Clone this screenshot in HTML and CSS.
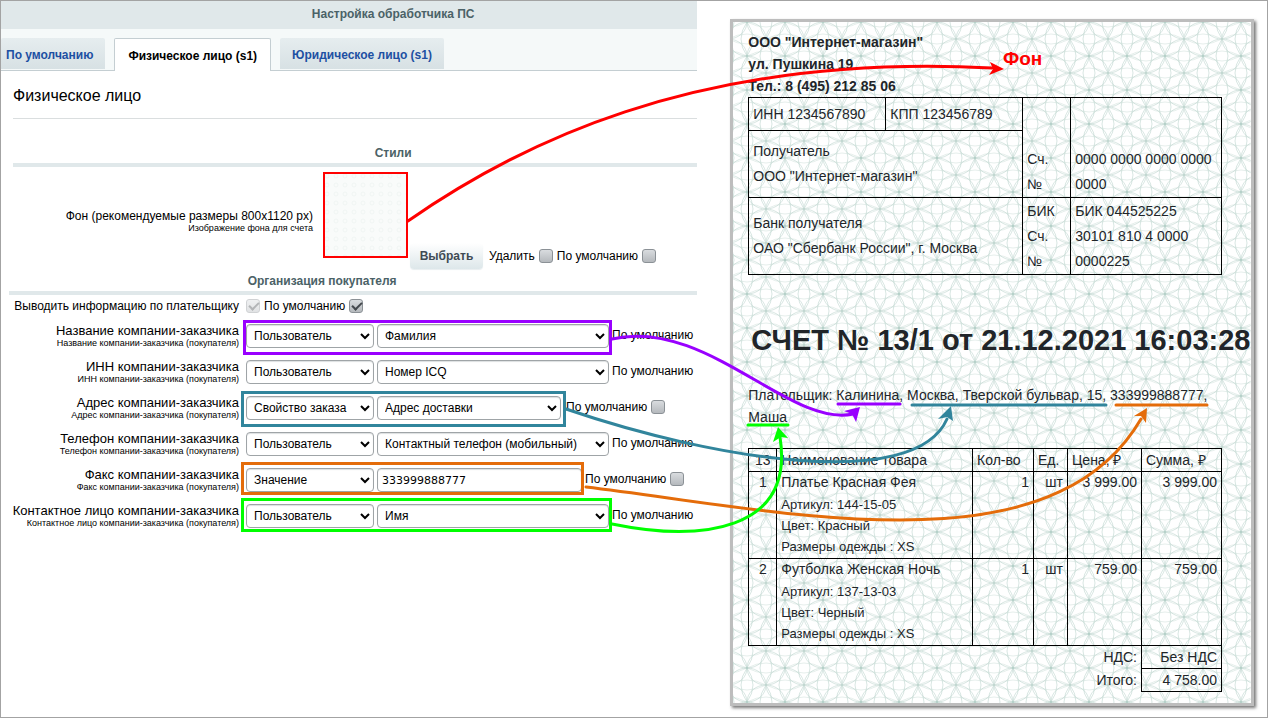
FILE: index.html
```html
<!DOCTYPE html>
<html lang="ru">
<head>
<meta charset="utf-8">
<title>Настройка обработчика ПС</title>
<link rel="stylesheet" href="styles.css">
</head>
<body>
<main class="stage">
  <section class="admin">
    <h1 class="admin-title">Настройка обработчика ПС</h1>
    <nav class="tabs">
      <a class="tab tab-first" href="#default">По умолчанию</a>
      <a class="tab tab-active" href="#person">Физическое лицо (s1)</a>
      <a class="tab" href="#company">Юридическое лицо (s1)</a>
    </nav>
    <form class="settings">
      <h2 class="pane-title">Физическое лицо</h2>
      <h3 class="group-title styles-title">Стили</h3>
      <div class="bg-row">
        <div class="field-label bg-label"><span>Фон (рекомендуемые размеры 800x1120 px)</span><small>Изображение фона для счета</small></div>
        <div class="thumb"><svg width="85" height="86" aria-hidden="true"><defs><pattern id="dots" width="9" height="9" patternUnits="userSpaceOnUse"><circle cx="4" cy="4" r="2" fill="none" stroke="#f0f4f3"/></pattern></defs><rect width="85" height="86" fill="#f9fbfa"/><rect width="85" height="86" fill="url(#dots)"/></svg></div>
        <div class="bg-actions">
          <button type="button" class="pick">Выбрать</button>
          <label class="check">Удалить <input type="checkbox"></label>
          <label class="check">По умолчанию <input type="checkbox"></label>
        </div>
      </div>
      <h3 class="group-title org-title">Организация покупателя</h3>
      <div class="fields">
        <div class="row row-short">
          <label class="field-label" for="show">Выводить информацию по плательщику</label>
          <div class="checks"><input type="checkbox" id="show" checked disabled><label class="check">По умолчанию <input type="checkbox" checked></label></div>
        </div>
        <div class="row">
          <label class="field-label" for="f1"><span>Название компании-заказчика</span><small>Название компании-заказчика (покупателя)</small></label>
          <div class="controls"><select class="kind" id="f1"><option>Пользователь</option></select><select class="value" aria-label="Название"><option>Фамилия</option></select><span class="after">По умолчанию</span></div>
        </div>
        <div class="row">
          <label class="field-label" for="f2"><span>ИНН компании-заказчика</span><small>ИНН компании-заказчика (покупателя)</small></label>
          <div class="controls"><select class="kind" id="f2"><option>Пользователь</option></select><select class="value" aria-label="ИНН"><option>Номер ICQ</option></select><span class="after">По умолчанию</span></div>
        </div>
        <div class="row">
          <label class="field-label" for="f3"><span>Адрес компании-заказчика</span><small>Адрес компании-заказчика (покупателя)</small></label>
          <div class="controls"><select class="kind" id="f3"><option>Свойство заказа</option></select><select class="value value-address" aria-label="Адрес"><option>Адрес доставки</option></select><label class="after check">По умолчанию <input type="checkbox"></label></div>
        </div>
        <div class="row">
          <label class="field-label" for="f4"><span>Телефон компании-заказчика</span><small>Телефон компании-заказчика (покупателя)</small></label>
          <div class="controls"><select class="kind" id="f4"><option>Пользователь</option></select><select class="value" aria-label="Телефон"><option>Контактный телефон (мобильный)</option></select><span class="after">По умолчанию</span></div>
        </div>
        <div class="row">
          <label class="field-label" for="f5"><span>Факс компании-заказчика</span><small>Факс компании-заказчика (покупателя)</small></label>
          <div class="controls"><select class="kind" id="f5"><option>Значение</option></select><input class="value value-text" type="text" value="333999888777" aria-label="Факс"><label class="after check">По умолчанию <input type="checkbox"></label></div>
        </div>
        <div class="row">
          <label class="field-label" for="f6"><span>Контактное лицо компании-заказчика</span><small>Контактное лицо компании-заказчика (покупателя)</small></label>
          <div class="controls"><select class="kind" id="f6"><option>Пользователь</option></select><select class="value" aria-label="Контактное лицо"><option>Имя</option></select><span class="after">По умолчанию</span></div>
        </div>
      </div>
    </form>
  </section>

  <section class="preview">
    <article class="invoice">
      <svg class="guilloche" width="100%" height="100%" aria-hidden="true">
        <defs>
          <pattern id="net" x="33" y="17" width="38" height="34" patternUnits="userSpaceOnUse">
            <g fill="none" stroke="#a9c8be" stroke-width="1" stroke-opacity=".45">
              <ellipse cx="19" cy="0" rx="19" ry="17"/><ellipse cx="19" cy="34" rx="19" ry="17"/>
              <ellipse cx="0" cy="17" rx="19" ry="17"/><ellipse cx="38" cy="17" rx="19" ry="17"/>
              <path d="M0 0Q12 17 0 34M38 0Q26 17 38 34"/>
              <path d="M19 -17Q31 0 19 17Q31 34 19 51M19 -17Q7 0 19 17Q7 34 19 51"/>
              <path d="M0 0Q19 10 38 0M0 34Q19 24 38 34M-19 17Q0 27 19 17Q38 27 57 17M-19 17Q0 7 19 17Q38 7 57 17" stroke-opacity=".3"/>
            </g>
          </pattern>
        </defs>
        <rect width="100%" height="100%" fill="url(#net)"/>
      </svg>
      <div class="paper">
        <header class="seller">
          <div>ООО "Интернет-магазин"</div>
          <div>ул. Пушкина 19</div>
          <div>Тел.: 8 (495) 212 85 06</div>
        </header>
        <table class="bank">
          <colgroup><col class="b1"><col class="b2"><col class="b3"><col></colgroup>
          <tr class="codes"><td>ИНН 1234567890</td><td>КПП 123456789</td><td rowspan="2" class="low">Сч.<br>№</td><td rowspan="2" class="low">0000 0000 0000 0000 0000</td></tr>
          <tr class="payee"><td colspan="2">Получатель<br>ООО "Интернет-магазин"</td></tr>
          <tr class="payee-bank"><td colspan="2">Банк получателя<br>ОАО "Сбербанк России", г. Москва</td><td>БИК<br>Сч.<br>№</td><td>БИК 044525225<br>30101 810 4 0000<br>0000225</td></tr>
        </table>
        <h2 class="number">СЧЕТ № 13/1 от 21.12.2021 16:03:28</h2>
        <p class="payer">Плательщик: Калинина, Москва, Тверской бульвар, 15, 333999888777,<br>Маша</p>
        <table class="items">
          <colgroup><col class="c1"><col><col class="c3"><col class="c4"><col class="c5"><col class="c6"></colgroup>
          <thead><tr><th class="mid">13</th><th>Наименование товара</th><th>Кол-во</th><th>Ед.</th><th>Цена, ₽</th><th>Сумма, ₽</th></tr></thead>
          <tbody>
            <tr><td class="mid">1</td><td>Платье Красная Фея<small>Артикул: 144-15-05<br>Цвет: Красный<br>Размеры одежды : XS</small></td><td class="num">1</td><td class="num">шт</td><td class="num">3 999.00</td><td class="num">3 999.00</td></tr>
            <tr><td class="mid">2</td><td>Футболка Женская Ночь<small>Артикул: 137-13-03<br>Цвет: Черный<br>Размеры одежды : XS</small></td><td class="num">1</td><td class="num">шт</td><td class="num">759.00</td><td class="num">759.00</td></tr>
          </tbody>
          <tfoot>
            <tr><td colspan="5" class="num total-label">НДС:</td><td class="num">Без НДС</td></tr>
            <tr><td colspan="5" class="num total-label">Итого:</td><td class="num">4 758.00</td></tr>
          </tfoot>
        </table>
      </div>
    </article>
  </section>

  <svg class="notes" width="1268" height="718" viewBox="0 0 1268 718" role="img" aria-label="Связь полей настройки со счетом">
    <g fill="none" stroke-width="3" stroke-linecap="round">
      <rect x="324" y="173" width="83" height="84" stroke="#f00" stroke-width="2"/>
      <path d="M408 221C510 150 690 52 992 68" stroke="#f00"/>
      <rect x="244.500" y="321.500" width="366" height="32" stroke="#90f"/>
      <rect x="242.500" y="392.500" width="322" height="33" stroke="#31859c"/>
      <rect x="242.500" y="463.500" width="340" height="30" stroke="#e46c0a"/>
      <rect x="242.500" y="499.500" width="368" height="31" stroke="#0f0"/>
      <path d="M612 339C705 317 790 428 853 414M838 404H900" stroke="#90f"/>
      <path d="M566 409C715 460 915 492 947 419M912 405H1106" stroke="#31859c"/>
      <path d="M586 487C780 510 1050 575 1141 419M1116 405H1207" stroke="#e46c0a"/>
      <path d="M612 524C700 542 795 532 780 437M748 425H788" stroke="#0f0"/>
    </g>
    <path d="M1004 69L989 75L993 69L990 62Z" fill="#f00"/>
    <path d="M860 407L856 422L852 414L844 411Z" fill="#90f"/>
    <path d="M951 406L953 421L947 417L938 419Z" fill="#31859c"/>
    <path d="M1147 408L1146 423L1141 416L1134 416Z" fill="#e46c0a"/>
    <path d="M778 427L788 438L781 437L773 442Z" fill="#0f0"/>
    <text class="note-text" x="1003" y="65">Фон</text>
  </svg>
</main>
</body>
</html>
```
FILE: styles.css
```css
* { box-sizing: border-box; }
body { margin: 0; background: #fff; font-family: "Liberation Sans", Arial, sans-serif; font-size: 12px; color: #000; }
h1, h2, h3, p { margin: 0; }
.stage { position: relative; display: grid; grid-template-columns: minmax(0, 11fr) minmax(0, 9fr); min-height: 100vh; border: 1px solid #a3a3a3; overflow: hidden; }

.admin-title { height: 28px; padding-left: 88px; background: #e0e8ea; color: #4b6267; font-size: 12px; line-height: 26px; text-align: center; }
.tabs { display: flex; gap: 9px; height: 42px; padding-top: 9px; background: #f5f9f9; border-bottom: 1px solid #c4ced2; }
.tab { height: 31px; padding: 0 12px; background: linear-gradient(#e6edef, #d7e1e4); color: #1d50a2; font-size: 12px; font-weight: bold; line-height: 34px; text-decoration: none; border-radius: 2px 2px 0 0; white-space: nowrap; }
.tab-first { padding: 0 12px 0 5px; }
.tab-active { height: 33px; padding: 0 13px; background: #fff; border: 1px solid #c4ced2; border-bottom: 0; color: #000; }

.pane-title { height: 48px; margin-left: 12px; border-bottom: 1px solid #dadedf; font-size: 16px; font-weight: normal; line-height: 50px; }
.group-title { border-bottom: 4px solid #e0e8ea; color: #4b6267; font-size: 12px; line-height: 20px; text-align: center; }
.styles-title { margin: 24px 0 0 12px; padding-left: 76px; }
.org-title { margin-left: 8px; padding-right: 62px; }

.bg-row { display: flex; height: 104px; padding-top: 5px; }
.field-label { display: block; text-align: right; font-size: 12px; line-height: 14px; white-space: nowrap; }
.field-label span { display: block; font-size: 13px; }
.field-label small { display: block; font-size: 9px; line-height: 10px; }
.bg-label { width: 312px; margin-top: 37px; }
.bg-label span { font-size: 12px; }
.thumb { margin-left: 10px; width: 85px; height: 86px; }
.bg-actions { display: flex; align-items: center; align-self: flex-start; gap: 4px; margin: 71px 0 0 2px; }
.pick { width: 73px; height: 26px; margin-right: 2px; padding: 0; border: 0; border-radius: 4px; background: linear-gradient(#fff, #dde7ea); box-shadow: 0 1px 1px #e8eef0; color: #3f4b54; font: bold 12px "Liberation Sans", Arial, sans-serif; }

.check { display: inline-flex; align-items: center; gap: 4px; line-height: 14px; white-space: nowrap; }
input[type=checkbox] { appearance: none; width: 14px; height: 14px; margin: 0; border: 1px solid #8b9196; border-radius: 3px; background: linear-gradient(#d9dcdf, #b5b9bd); }
input[type=checkbox]:checked::before { content: ""; display: block; width: 8px; height: 4px; margin: 2px; border: solid #43484d; border-width: 0 0 2px 2px; rotate: -45deg; }
input[type=checkbox]:disabled { opacity: .4; }

.row { display: grid; grid-template-columns: 238px 1fr; column-gap: 7px; height: 36px; }
.row-short { height: 29px; padding-top: 4px; }
.checks { display: flex; align-items: flex-start; gap: 4px; }
.controls { display: flex; align-items: flex-start; gap: 3px; }
.controls select, .value-text { height: 24px; border: 1px solid #9fa4a7; border-radius: 4px; background-color: #fff; color: #000; font: 12px "Liberation Sans", Arial, sans-serif; box-shadow: inset 0 1px 1px #dcdfe0; }
.controls select { padding: 0 3px; }
.kind { width: 128px; }
.value { width: 232px; }
.value-address { width: 184px; margin-right: 2px; }
.controls .value-text { width: 205px; padding: 0 4px; font-family: "DejaVu Sans", sans-serif; font-size: 11px; }
.after { margin-top: 4px; line-height: 14px; white-space: nowrap; }

.preview { display: flex; min-width: 0; padding: 18px 13px 11px 33px; }
.invoice { position: relative; flex: 1; min-width: 0; border: 3px solid #bdbdbd; box-shadow: 2px 2px 3px #777; color: #212529; }
.guilloche { position: absolute; inset: 0; }
.paper { position: relative; padding: 9px 29px 0 15px; font-size: 14px; }
.seller { font-weight: bold; line-height: 22px; }
table { width: 100%; border-collapse: collapse; table-layout: fixed; }
td, th { padding: 0 4px; border: 1px solid #000; font-weight: normal; text-align: left; }
.bank { line-height: 25px; }
.b1, .b2 { width: 137px; }
.b3 { width: 48px; }
.codes { height: 33px; }
.payee { height: 67px; }
.payee-bank { height: 77px; }
.low { vertical-align: bottom; }
.number { margin-top: 44px; padding-left: 3px; font-size: 29px; line-height: 42px; white-space: nowrap; }
.payer { margin-top: 23px; line-height: 22px; white-space: nowrap; }
.items { margin-top: 20px; line-height: 22px; }
.items td { vertical-align: top; }
.items tbody td { line-height: 21px; }
.items small { display: block; margin-top: 1px; padding-bottom: 1px; font-size: 13px; }
.c1 { width: 28px; } .c3 { width: 61px; } .c4 { width: 34px; } .c5 { width: 74px; } .c6 { width: 80px; }
.items .mid { text-align: center; }
.items .num { text-align: right; }
.items .total-label { border: 0; }

.notes { position: absolute; top: -1px; left: -1px; pointer-events: none; }
.note-text { fill: #f00; font-size: 19px; font-weight: bold; }
```
